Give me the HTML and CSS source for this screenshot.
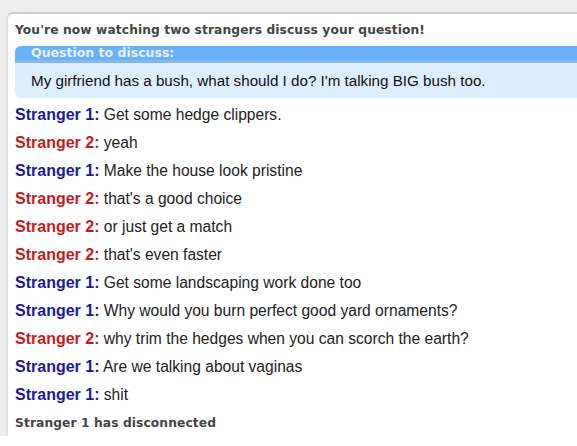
FILE: index.html
```html
<!DOCTYPE html>
<html>
<head>
<meta charset="utf-8">
<link rel="stylesheet" href="styles.css">
</head>
<body>
<div class="page">
  <div class="panel">
    <div class="status">You're now watching two strangers discuss your question!</div>
    <div class="question">
      <div class="q-title">Question to discuss:</div>
      <div class="q-body">My girfriend has a bush, what should I do? I'm talking BIG bush too.</div>
    </div>
    <div class="log">
      <p class="msg"><span class="s1">Stranger 1:</span> Get some hedge clippers.</p>
      <p class="msg"><span class="s2">Stranger 2:</span> yeah</p>
      <p class="msg"><span class="s1">Stranger 1:</span> Make the house look pristine</p>
      <p class="msg"><span class="s2">Stranger 2:</span> that's a good choice</p>
      <p class="msg"><span class="s2">Stranger 2:</span> or just get a match</p>
      <p class="msg"><span class="s2">Stranger 2:</span> that's even faster</p>
      <p class="msg"><span class="s1">Stranger 1:</span> Get some landscaping work done too</p>
      <p class="msg"><span class="s1">Stranger 1:</span> Why would you burn perfect good yard ornaments?</p>
      <p class="msg"><span class="s2">Stranger 2:</span> why trim the hedges when you can scorch the earth?</p>
      <p class="msg"><span class="s1">Stranger 1:</span> Are we talking about vaginas</p>
      <p class="msg"><span class="s1">Stranger 1:</span> shit</p>
    </div>
    <div class="status end">Stranger 1 has disconnected</div>
  </div>
</div>
</body>
</html>
```

FILE: styles.css
```css
html, body {
  margin: 0;
  padding: 0;
  background: #ffffff;
}
.page {
  background: #eeeeee;
  padding: 12px 0 0 6px;
  height: 424px;
  overflow: hidden;
}
.panel {
  background: #ffffff;
  border-top: 2px solid #cfcfcf;
  border-left: 2px solid #e2e2e2;
  border-top-left-radius: 7px;
  height: 100%;
  padding: 8px 0 0 7px;
  box-sizing: border-box;
}
.status {
  font-family: "DejaVu Sans", Verdana, sans-serif;
  font-weight: bold;
  font-size: 12.25px;
  color: #444444;
  line-height: 16px;
  letter-spacing: 0.1px;
}
.question {
  margin-top: 8px;
  border-top-left-radius: 6px;
  border-bottom-left-radius: 6px;
  overflow: hidden;
  background: #ddeeff;
}
.q-title {
  background: #69b1fa;
  border-bottom: 3px solid #8ab6e8;
  color: #e6f2ff;
  font-family: "DejaVu Sans", Verdana, sans-serif;
  font-weight: bold;
  font-size: 12.5px;
  line-height: 14px;
  padding: 0 0 0 16px;
}
.q-body {
  font-family: "Liberation Sans", Arial, sans-serif;
  font-size: 15.2px;
  color: #111111;
  line-height: 35px;
  padding-left: 16px;
}
.log {
  margin-top: 3px;
}
.msg {
  margin: 0;
  font-family: "Liberation Sans", Arial, sans-serif;
  font-size: 15.6px;
  line-height: 28px;
  color: #222222;
}
.s1, .s2 {
  font-weight: bold;
  font-size: 16px;
}
.s1 { color: #1a1a9e; }
.s2 { color: #c41c1c; }
.status.end {
  margin-top: 6px;
}
```
